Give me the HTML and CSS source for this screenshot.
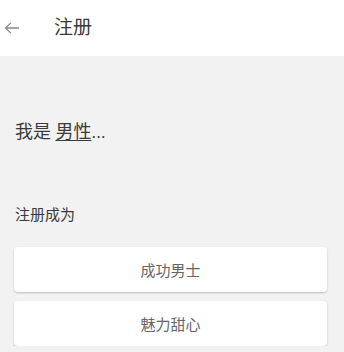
FILE: index.html
```html
<!DOCTYPE html>
<html lang="zh">
<head>
<meta charset="utf-8">
<link rel="stylesheet" href="styles.css">
</head>
<body>
<header class="bar">
  <svg class="back" width="16" height="12" viewBox="0 0 16 12">
    <path d="M15 6 H1.5 M7 0.6 L1.5 6 L7 11.4" fill="none" stroke="#8a8a8a" stroke-width="1.3"/>
  </svg>
  <span class="title">注册</span>
</header>
<main class="content">
  <p class="who">我是 <u class="gender">男性</u>...</p>
  <p class="label">注册成为</p>
  <div class="cards">
    <div class="card">成功男士</div>
    <div class="card">魅力甜心</div>
  </div>
</main>
</body>
</html>
```
FILE: styles.css
```css
html, body {
  margin: 0;
  padding: 0;
  background: #f2f2f2;
  font-family: Roboto, "Noto Sans CJK SC", sans-serif;
}
.bar {
  height: 56px;
  background: #fff;
  display: flex;
  align-items: center;
  padding-left: 4px;
}
.back {
  display: block;
}
.title {
  margin-left: 34px;
  font-size: 19px;
  color: #3a3a3a;
  line-height: 24px;
}
.content {
  display: flex;
  flex-direction: column;
}
.who {
  margin: 64px 0 0 15px;
  font-size: 18px;
  line-height: 24px;
  color: #3a3a3a;
}
.gender {
  text-decoration: underline;
  text-underline-offset: 2px;
}
.label {
  margin: 61px 0 0 15px;
  font-size: 15px;
  line-height: 20px;
  color: #3a3a3a;
}
.cards {
  margin: 22px 0 0 14px;
  width: 313px;
  display: flex;
  flex-direction: column;
  gap: 9px;
}
.card {
  height: 45px;
  background: #fff;
  border-radius: 4px;
  box-shadow: 0 1px 2px rgba(0, 0, 0, 0.22);
  display: flex;
  align-items: center;
  justify-content: center;
  font-size: 15px;
  color: #666;
}
```
